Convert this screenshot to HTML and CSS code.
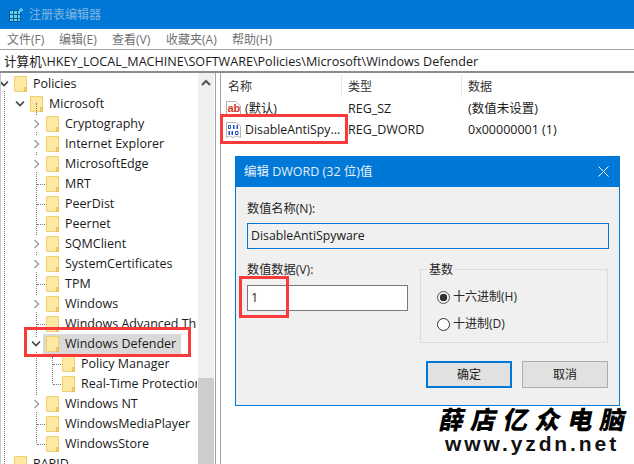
FILE: index.html
```html
<!DOCTYPE html>
<html lang="zh-CN">
<head>
<meta charset="utf-8">
<title>注册表编辑器</title>
<link rel="stylesheet" href="styles.css">
</head>
<body>
<svg class="defs" width="0" height="0" aria-hidden="true">
  <symbol id="folder" viewBox="0 0 13 16">
    <path d="M.5 .5H12.5V15.5H.5Z" fill="#fde58f" stroke="#f0cf6c"/>
    <path d="M1 1H12V13H10V15H1Z" fill="#fee9a3"/>
    <path d="M10.5 15.5V11.5H12.5V15.5Z" fill="#f7d777" stroke="#e8bf55" stroke-width="1"/>
  </symbol>
  <symbol id="chev-r" viewBox="0 0 8 10">
    <path d="M1.500 1L5.500 5L1.500 9" fill="none" stroke="#a6a6a6" stroke-width="1.600"/>
  </symbol>
  <symbol id="chev-d" viewBox="0 0 10 8">
    <path d="M1 1.500L5 5.500L9 1.500" fill="none" stroke="#404040" stroke-width="1.600"/>
  </symbol>
</svg>
<div class="app">
  <header class="title">
    <svg class="app-icon" width="14" height="14" viewBox="0 0 14 14">
      <rect x="0" y="2" width="12" height="12" fill="#0d5c91"/>
      <path d="M1 3h3v3H1zM5 3h3v3H5zM9 3h2v3H9zM1 7h3v3H1zM5 7h3v3H5zM9 7h2v3H9zM1 11h3v2H1zM5 11h3v2H5zM9 11h2v2H9z" fill="#62d2f5"/>
      <path d="M12 0v4M10 2h4" stroke="#62d2f5" stroke-width="1.400"/>
    </svg>
    <span>注册表编辑器</span>
  </header>
  <nav class="menu">
    <span class="m1">文件(F)</span><span class="m2">编辑(E)</span><span class="m3">查看(V)</span><span class="m4">收藏夹(A)</span><span>帮助(H)</span>
  </nav>
  <div class="address">计算机\HKEY_LOCAL_MACHINE\SOFTWARE\Policies\Microsoft\Windows Defender</div>
  <main class="main">
    <section class="tree">
      <div class="rows">
        <b class="guide g0"></b><b class="guide g2"></b><b class="guide g3"></b>
        <div class="row l0"><i class="tw"><svg class="cd" width="10" height="8"><use href="#chev-d"/></svg></i><svg class="fd" width="13" height="16"><use href="#folder"/></svg><span>Policies</span></div>
        <div class="row l1"><i class="tw"><svg class="cd" width="10" height="8"><use href="#chev-d"/></svg></i><svg class="fd" width="13" height="16"><use href="#folder"/></svg><span>Microsoft</span></div>
        <div class="row l2"><i class="tw"><svg width="8" height="10"><use href="#chev-r"/></svg></i><svg class="fd" width="13" height="16"><use href="#folder"/></svg><span>Cryptography</span></div>
        <div class="row l2"><i class="tw"><svg width="8" height="10"><use href="#chev-r"/></svg></i><svg class="fd" width="13" height="16"><use href="#folder"/></svg><span>Internet Explorer</span></div>
        <div class="row l2"><i class="tw"><svg width="8" height="10"><use href="#chev-r"/></svg></i><svg class="fd" width="13" height="16"><use href="#folder"/></svg><span>MicrosoftEdge</span></div>
        <div class="row l2"><i class="tw leaf"></i><svg class="fd" width="13" height="16"><use href="#folder"/></svg><span>MRT</span></div>
        <div class="row l2"><i class="tw leaf"></i><svg class="fd" width="13" height="16"><use href="#folder"/></svg><span>PeerDist</span></div>
        <div class="row l2"><i class="tw leaf"></i><svg class="fd" width="13" height="16"><use href="#folder"/></svg><span>Peernet</span></div>
        <div class="row l2"><i class="tw"><svg width="8" height="10"><use href="#chev-r"/></svg></i><svg class="fd" width="13" height="16"><use href="#folder"/></svg><span>SQMClient</span></div>
        <div class="row l2"><i class="tw"><svg width="8" height="10"><use href="#chev-r"/></svg></i><svg class="fd" width="13" height="16"><use href="#folder"/></svg><span>SystemCertificates</span></div>
        <div class="row l2"><i class="tw leaf"></i><svg class="fd" width="13" height="16"><use href="#folder"/></svg><span>TPM</span></div>
        <div class="row l2"><i class="tw"><svg width="8" height="10"><use href="#chev-r"/></svg></i><svg class="fd" width="13" height="16"><use href="#folder"/></svg><span>Windows</span></div>
        <div class="row l2"><i class="tw leaf"></i><svg class="fd" width="13" height="16"><use href="#folder"/></svg><span>Windows Advanced Threat Protection</span></div>
        <div class="row l2"><i class="tw"><svg class="cd" width="10" height="8"><use href="#chev-d"/></svg></i><span class="sel"><svg class="fd" width="13" height="16"><use href="#folder"/></svg><span>Windows Defender</span></span></div>
        <div class="row l3"><i class="tw leaf"></i><svg class="fd" width="13" height="16"><use href="#folder"/></svg><span>Policy Manager</span></div>
        <div class="row l3"><i class="tw leaf"></i><svg class="fd" width="13" height="16"><use href="#folder"/></svg><span>Real-Time Protection</span></div>
        <div class="row l2"><i class="tw"><svg width="8" height="10"><use href="#chev-r"/></svg></i><svg class="fd" width="13" height="16"><use href="#folder"/></svg><span>Windows NT</span></div>
        <div class="row l2"><i class="tw leaf"></i><svg class="fd" width="13" height="16"><use href="#folder"/></svg><span>WindowsMediaPlayer</span></div>
        <div class="row l2"><i class="tw leaf"></i><svg class="fd" width="13" height="16"><use href="#folder"/></svg><span>WindowsStore</span></div>
        <div class="row l0"><i class="tw"></i><svg class="fd" width="13" height="16"><use href="#folder"/></svg><span>RAPID</span></div>
      </div>
      <div class="scrollbar">
        <svg class="arrow" width="16" height="20" viewBox="0 0 16 20"><path d="M4 12L8 8L12 12" fill="none" stroke="#505050" stroke-width="2"/></svg>
        <div class="thumb"></div>
      </div>
    </section>
    <div class="splitter"></div>
    <section class="list">
      <div class="lrow head"><span class="c1">名称</span><span class="c2">类型</span><span class="c3">数据</span></div>
      <div class="lrow">
        <span class="c1 name"><svg class="ficon" width="15" height="16" viewBox="0 0 15 16"><path d="M.5 .5H10L14.500 5V15.500H.5Z" fill="#fff" stroke="#b5b5b5"/><text x="1.500" y="11" class="ab">ab</text></svg>(默认)</span>
        <span class="c2">REG_SZ</span><span class="c3">(数值未设置)</span>
      </div>
      <div class="lrow">
        <span class="c1 name"><svg class="ficon" width="15" height="16" viewBox="0 0 15 16"><path d="M.5 .5H10L14.500 4V15.500L11 14L7 15.500L3.500 14L.5 15.500Z" fill="#fff" stroke="#b5b5b5"/><path d="M2.500 3.500h2v3h-2z" fill="none" stroke="#1e4fbf"/><path d="M7 3h1.500v4H7zM10.500 3h1.500v4h-1.500zM2.500 9h1.500v4H2.500zM5.500 9h1.500v4H5.500z" fill="#1e4fbf"/><path d="M9.500 9.500h2.500v3H9.500z" fill="none" stroke="#1e4fbf"/></svg>DisableAntiSpy...</span>
        <span class="c2">REG_DWORD</span><span class="c3">0x00000001 (1)</span>
      </div>
    </section>
  </main>

  <div class="dialog">
    <div class="dtitle"><span>编辑 DWORD (32 位)值</span>
      <svg width="11" height="11" viewBox="0 0 11 11"><path d="M.5 .5L10.500 10.500M10.500 .5L.5 10.500" stroke="#fff" stroke-width="1"/></svg>
    </div>
    <div class="dbody">
      <label class="lbl">数值名称(N):</label>
      <div class="namefield">DisableAntiSpyware</div>
      <div class="split">
        <div class="dataside">
          <label class="lbl">数值数据(V):</label>
          <div class="valuefield">1</div>
        </div>
        <div class="group">
          <span class="legend">基数</span>
          <div class="radio on"><i></i>十六进制(H)</div>
          <div class="radio"><i></i>十进制(D)</div>
        </div>
      </div>
      <div class="buttons">
        <div class="btn primary">确定</div>
        <div class="btn">取消</div>
      </div>
    </div>
  </div>

  <div class="mark m-name"></div>
  <div class="mark m-tree"></div>
  <div class="mark m-value"></div>
  <div class="water">
    <div class="wcn">薛店亿众电脑</div>
    <div class="wurl">www.yzdn.net</div>
  </div>
</div>
</body>
</html>
```
FILE: styles.css
```css
* { box-sizing: border-box; }
html, body { margin: 0; padding: 0; background: #fff; }
.defs { position: absolute; }
.app {
  position: relative;
  width: 634px;
  height: 464px;
  overflow: hidden;
  display: flex;
  flex-direction: column;
  font: 12.5px/20px "Open Sans", "Noto Sans CJK SC", sans-serif;
  color: #1a1a1a;
}
.title {
  height: 29px;
  flex: none;
  background: #0078d7;
  display: flex;
  align-items: center;
  padding-left: 9px;
  gap: 6px;
  color: #82b6e2;
  font-size: 12px;
}
.app-icon { flex: none; }
.menu {
  height: 20px;
  flex: none;
  display: flex;
  padding: 1px 0 0 7px;
  color: #6f6f6f;
  font-size: 12px;
}
.menu span { display: block; }
.m1 { width: 52px; }
.m2 { width: 53px; }
.m3 { width: 54px; }
.m4 { width: 66px; }
.address {
  height: 24px;
  flex: none;
  border-top: 1px solid #a0a0a0;
  border-bottom: 2px solid #8c8c8c;
  padding-left: 4px;
  line-height: 23px;
  white-space: nowrap;
  font-size: 12.6px;
}
.main { flex: 1; min-height: 0; display: flex; }
.tree { width: 215px; flex: none; display: flex; border-left: 1px solid #c8c8c8; }
.rows { position: relative; width: 196px; flex: none; overflow: hidden; padding-top: 1px; }
.scrollbar {
  width: 16px;
  flex: none;
  margin-left: 1px;
  background: #f0f0f0;
  display: flex;
  flex-direction: column;
  justify-content: space-between;
}
.arrow { display: block; }
.thumb { height: 86px; background: #cdcdcd; }
.row { height: 20px; display: flex; align-items: center; white-space: nowrap; }
.row.l0 { padding-left: 0; }
.row.l1 { padding-left: 16px; }
.row.l2 { padding-left: 32px; }
.row.l3 { padding-left: 48px; }
.tw { width: 13px; height: 20px; flex: none; position: relative; display: flex; align-items: center; }
.tw svg { display: block; background: #fff; box-shadow: 0 3px #fff, 0 -3px #fff; }
.tw .cd { margin-left: -2px; }
.tw.leaf::after {
  content: "";
  position: absolute;
  left: 4px;
  top: 10px;
  width: 8px;
  border-top: 1px dotted #7a7a7a;
}
.fd { flex: none; margin-right: 6px; }
.sel {
  display: flex;
  align-items: center;
  height: 20px;
  width: 138px;
  margin-left: -3px;
  padding-left: 3px;
  background: #d9d9d9;
}
.guide { position: absolute; border-left: 1px dotted #7a7a7a; }
.g0 { left: 3px; top: 18px; bottom: 0; }
.g2 { left: 35px; top: 30px; height: 340px; }
.g3 { left: 51px; top: 284px; height: 26px; }
.splitter { width: 6px; flex: none; border-left: 1px solid #a0a0a0; border-right: 1px solid #a0a0a0; }
.list { flex: 1; min-width: 0; }
.lrow { display: grid; grid-template-columns: 122px 120px 1fr; height: 21px; align-items: center; padding-left: 5px; white-space: nowrap; }
.lrow.head { height: 25px; padding-top: 2px; }
.head span { position: relative; color: #333; font-size: 12px; }
.head .c1 { padding-left: 2px; }
.head .c2::before, .head .c3::before {
  content: "";
  position: absolute;
  left: -7px;
  top: -2px;
  bottom: 0;
  border-left: 1px solid #e5e5e5;
}
.name { display: flex; align-items: center; gap: 4px; font-size: 12.3px; }
.ficon { flex: none; }
.ab { font: bold 11px "Liberation Sans", sans-serif; fill: #d0391c; }
.dialog {
  position: absolute;
  left: 235px;
  top: 156px;
  width: 385px;
  height: 250px;
  border: 1px solid #0078d7;
  background: #f0f0f0;
  display: flex;
  flex-direction: column;
  font-size: 12px;
}
.dtitle {
  height: 31px;
  flex: none;
  margin: -1px -1px 0;
  background: #0078d7;
  color: #e6f1fb;
  padding: 0 11px 0 9px;
  display: flex;
  align-items: center;
  justify-content: space-between;
  font-size: 12.5px;
}
.dbody { padding: 12px 11px 0; flex: 1; display: flex; flex-direction: column; }
.lbl { display: block; height: 20px; line-height: 20px; color: #262626; font-size: 12.2px; }
.namefield {
  width: 362px;
  height: 26px;
  margin-top: 4px;
  border: 1px solid #0078d7;
  padding-left: 3px;
  line-height: 23px;
  font-size: 12.3px;
}
.split { display: flex; margin-top: 11px; align-items: flex-start; }
.dataside { width: 173px; flex: none; }
.valuefield {
  width: 161px;
  height: 26px;
  margin-top: 5px;
  border: 1px solid #7a7a7a;
  background: #fff;
  padding-left: 3px;
  line-height: 24px;
  font-size: 12.5px;
}
.group {
  width: 189px;
  height: 74px;
  margin-top: 9px;
  padding: 17px 0 0 16px;
  border: 1px solid #dcdcdc;
  position: relative;
}
.legend {
  position: absolute;
  left: 6px;
  top: -10px;
  padding: 0 2px;
  background: #f0f0f0;
  height: 20px;
  line-height: 20px;
  font-size: 12px;
  color: #262626;
}
.radio { display: flex; align-items: center; gap: 3px; height: 20px; font-size: 12px; color: #262626; margin-bottom: 7px; }
.radio i { width: 13px; height: 13px; border: 1px solid #333; border-radius: 50%; background: #fff; flex: none; }
.radio.on i { border-color: #555; background: radial-gradient(circle, #333 0 3.5px, #f0f0f0 4px); }
.buttons { display: flex; justify-content: flex-end; gap: 10px; margin-top: 18px; }
.btn {
  width: 86px;
  height: 27px;
  background: #e1e1e1;
  border: 1px solid #adadad;
  text-align: center;
  line-height: 25px;
  font-size: 12px;
}
.btn.primary { border: 2px solid #0078d7; line-height: 23px; }
.mark { position: absolute; border: 3px solid #f73b3b; }
.m-name { left: 220px; top: 114px; width: 128px; height: 30px; }
.m-tree { left: 24px; top: 327px; width: 167px; height: 30px; }
.m-value { left: 239px; top: 276px; width: 50px; height: 42px; }
.water { position: absolute; left: 440px; top: 402px; width: 194px; color: #111; }
.wcn {
  font: 900 25px/32px "Noto Sans CJK SC", sans-serif;
  transform: skewX(-12deg);
  letter-spacing: 7.2px;
  white-space: nowrap;
  color: #000;
}
.wurl { font: 700 21px/20px "Liberation Sans", sans-serif; letter-spacing: 2.9px; white-space: nowrap; color: #111; padding-left: 5px; }
```
